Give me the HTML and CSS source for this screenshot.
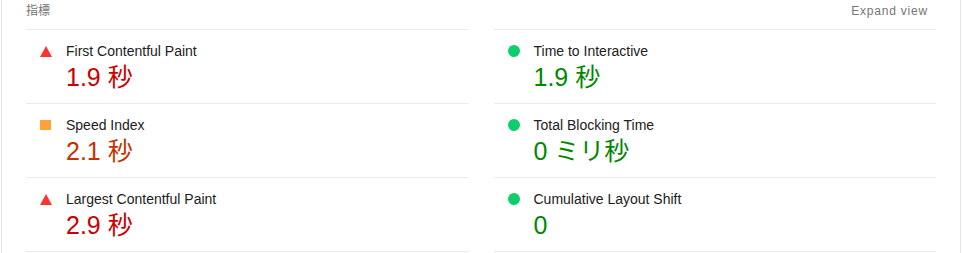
FILE: index.html
```html
<!DOCTYPE html>
<html lang="ja">
<head>
  <meta charset="UTF-8" />
  <meta name="viewport" content="width=device-width, initial-scale=1.0"/>
  <title>指標</title>
  <link rel="stylesheet" href="styles.css">
</head>
<body>
  <div class="panel">
    <div class="panel-header">
      <span class="titulo">指標</span>
      <span class="toggle">Expand view</span>
    </div>

    <div class="metrics">
      <div class="metric fail">
        <span class="icon"></span>
        <span class="label">First Contentful Paint</span>
        <span class="value">1.9 秒</span>
      </div>
      <div class="metric pass">
        <span class="icon"></span>
        <span class="label">Time to Interactive</span>
        <span class="value">1.9 秒</span>
      </div>
      <div class="metric average">
        <span class="icon"></span>
        <span class="label">Speed Index</span>
        <span class="value">2.1 秒</span>
      </div>
      <div class="metric pass">
        <span class="icon"></span>
        <span class="label">Total Blocking Time</span>
        <span class="value">0 ミリ秒</span>
      </div>
      <div class="metric fail">
        <span class="icon"></span>
        <span class="label">Largest Contentful Paint</span>
        <span class="value">2.9 秒</span>
      </div>
      <div class="metric pass">
        <span class="icon"></span>
        <span class="label">Cumulative Layout Shift</span>
        <span class="value">0</span>
      </div>
    </div>
  </div>
</body>
</html>
```

FILE: styles.css
```css
body {
  margin: 0;
  background: #fff;
  font-family: 'Liberation Sans', Arial, 'Noto Sans CJK JP', sans-serif;
  color: #212121;
}
.panel {
  margin: 0 1px;
  height: 253px;
  border-left: 1px solid #e6e6e6;
  border-right: 1px solid #e6e6e6;
  padding: 0 24px;
}
.panel-header {
  display: flex;
  justify-content: space-between;
  align-items: baseline;
  height: 29px;
  line-height: 22px;
  font-size: 12px;
  color: #757575;
}
.toggle {
  letter-spacing: 0.8px;
  padding-right: 8px;
}
.metrics {
  display: grid;
  grid-template-columns: 1fr 1fr;
  column-gap: 25px;
}
.metric {
  display: grid;
  grid-template-columns: 40px 1fr;
  align-items: center;
  padding: 11px 0;
  border-top: 1px solid #ebebeb;
}
.metric:nth-last-child(-n+2) {
  border-bottom: 1px solid #ebebeb;
}
.label {
  font-size: 14px;
  line-height: 20px;
}
.value {
  grid-column: 2;
  margin-top: 1px;
  font-size: 25px;
  line-height: 30px;
}
.icon {
  margin-left: 14px;
  width: 12px;
  height: 12px;
}
.fail .icon {
  width: 0;
  height: 0;
  border-left: 6px solid transparent;
  border-right: 6px solid transparent;
  border-bottom: 11px solid #ff3333;
}
.average .icon {
  width: 11px;
  height: 10px;
  background: #ffa23a;
}
.pass .icon {
  border-radius: 50%;
  background: #0cce6b;
}
.fail .value { color: #cc0000; }
.average .value { color: #c33300; }
.pass .value { color: #008800; }
```
